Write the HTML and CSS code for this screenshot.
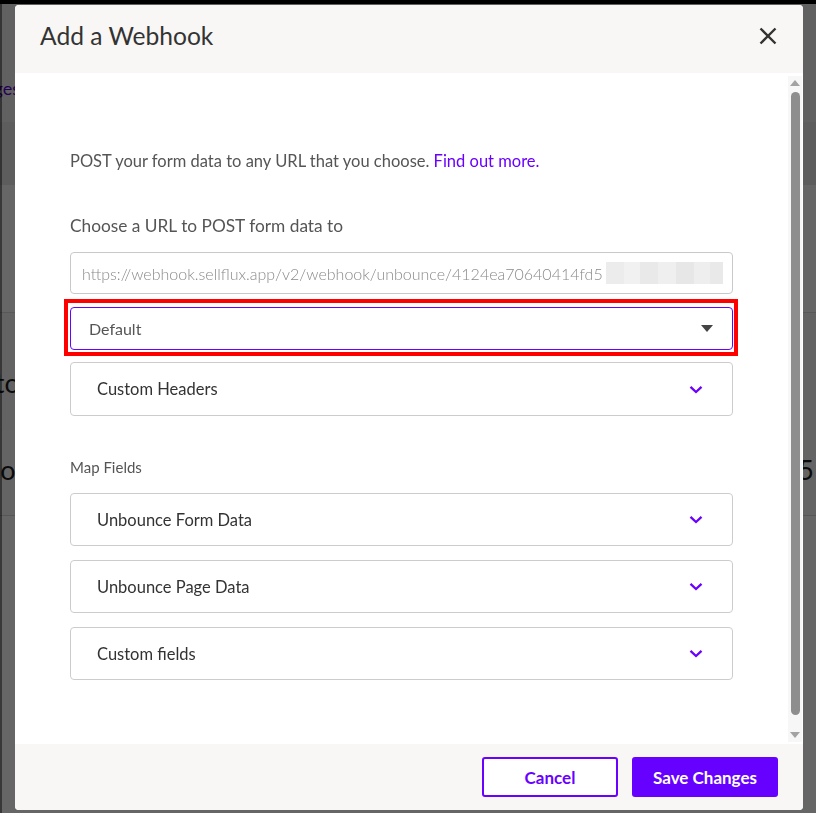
FILE: index.html
```html
<!DOCTYPE html>
<html lang="en">
<head>
<meta charset="utf-8">
<title>Add a Webhook</title>
<link rel="stylesheet" href="styles.css">
</head>
<body>
<div class="page">
  <div class="pg-row pg-nav"><span class="pg-link">Pages</span></div>
  <div class="pg-row pg-section"></div>
  <div class="pg-row pg-title"><span class="pg-big">Go to</span></div>
  <div class="pg-row pg-stats"><span class="pg-big">No</span><span class="pg-big">65</span></div>
  <div class="pg-row pg-rest"></div>
</div>

<div class="top-strip"></div>

<div class="backdrop">
  <div class="modal" role="dialog" aria-labelledby="modal-title">
    <header class="modal-header">
      <h1 id="modal-title" class="modal-title">Add a Webhook</h1>
      <button class="close-btn" aria-label="Close">
        <svg width="18" height="18" viewBox="0 0 18 18"><path d="M1.5 1.5 L16.5 16.5 M16.5 1.5 L1.5 16.5" stroke="#333" stroke-width="2.4" fill="none"/></svg>
      </button>
    </header>

    <div class="modal-body">
      <div class="content">
        <p class="intro">POST your form data to any URL that you choose. <a class="link" href="#">Find out more.</a></p>
        <p class="label">Choose a URL to POST form data to</p>
        <div class="input">
          <span class="url-text">https://webhook.sellflux.app/v2/webhook/unbounce/4124ea70640414fd5</span>
          <span class="redact"></span>
        </div>
        <div class="highlight">
          <div class="select">
            <span>Default</span>
            <span class="caret"></span>
          </div>
        </div>
        <div class="accordion first">
          <span>Custom Headers</span>
          <svg class="chev" width="14" height="9" viewBox="0 0 14 9"><path d="M1.5 1.8 L7 7 L12.5 1.8" stroke="#6a00ff" stroke-width="2.3" fill="none"/></svg>
        </div>
        <p class="section-label">Map Fields</p>
        <div class="acc-list">
          <div class="accordion">
            <span>Unbounce Form Data</span>
            <svg class="chev" width="14" height="9" viewBox="0 0 14 9"><path d="M1.5 1.8 L7 7 L12.5 1.8" stroke="#6a00ff" stroke-width="2.3" fill="none"/></svg>
          </div>
          <div class="accordion">
            <span>Unbounce Page Data</span>
            <svg class="chev" width="14" height="9" viewBox="0 0 14 9"><path d="M1.5 1.8 L7 7 L12.5 1.8" stroke="#6a00ff" stroke-width="2.3" fill="none"/></svg>
          </div>
          <div class="accordion">
            <span>Custom fields</span>
            <svg class="chev" width="14" height="9" viewBox="0 0 14 9"><path d="M1.5 1.8 L7 7 L12.5 1.8" stroke="#6a00ff" stroke-width="2.3" fill="none"/></svg>
          </div>
        </div>
      </div>

      <div class="scrollbar" aria-hidden="true">
        <span class="sb-btn"><span class="tri-up"></span></span>
        <span class="sb-thumb"></span>
        <span class="sb-space"></span>
        <span class="sb-btn"><span class="tri-down"></span></span>
      </div>
    </div>

    <footer class="modal-footer">
      <button class="btn btn-outline">Cancel</button>
      <button class="btn btn-primary">Save Changes</button>
    </footer>
  </div>
</div>
</body>
</html>
```
FILE: styles.css
```css
* { box-sizing: border-box; }

html, body {
  margin: 0;
  padding: 0;
  height: 100%;
}

body {
  font-family: Lato, "Liberation Sans", sans-serif;
  background: #ffffff;
  color: #333;
  overflow: hidden;
}

/* underlying page (seen through the backdrop) */
.page {
  display: flex;
  flex-direction: column;
}
.pg-row {
  display: flex;
  align-items: flex-start;
  justify-content: space-between;
}
.pg-nav {
  height: 185px;
  padding-top: 77px;
  background: linear-gradient(#f2f2f2 0 122px, #e9e9e9 122px);
}
.pg-link {
  color: #5a00d6;
  font-size: 18px;
  line-height: 22px;
  margin-left: -26px;
}
.pg-section {
  height: 128px;
  background: #fff;
  border-bottom: 1px solid #dcdcdc;
}
.pg-big {
  font-size: 27px;
  line-height: 30px;
  color: #1d1d1d;
}
.pg-title {
  height: 117px;
  padding-top: 55px;
  background: #f8f8f8;
}
.pg-title .pg-big { margin-left: -47px; }
.pg-stats {
  height: 86px;
  padding-top: 25px;
  background: #fafafa;
  border-bottom: 1px solid #d6d6d6;
}
.pg-stats .pg-big:first-child { margin-left: -20px; }
.pg-stats .pg-big:last-child { margin-right: 2px; }
.pg-rest { height: 400px; background: #fff; }

.top-strip {
  position: fixed;
  top: 0;
  left: 0;
  right: 0;
  height: 4px;
  background: #000;
  z-index: 5;
}

/* overlay */
.backdrop {
  position: fixed;
  top: 4px;
  left: 0;
  right: 0;
  bottom: 0;
  background: rgba(0, 0, 0, 0.6);
  border-left: 2px solid rgba(0, 0, 0, 0.45);
  padding: 1px 13px 3px 13px;
  display: flex;
}

.modal {
  width: 788px;
  height: 805px;
  background: #fff;
  border-radius: 4px;
  overflow: hidden;
  display: flex;
  flex-direction: column;
}

.modal-header {
  flex: 0 0 68px;
  background: #f8f7f5;
  display: flex;
  align-items: center;
  justify-content: space-between;
  padding: 0 26px 7px 25px;
}
.modal-title {
  margin: 0;
  font-size: 24.6px;
  font-weight: 400;
  color: #333;
}
.close-btn {
  border: 0;
  background: none;
  padding: 0;
  width: 18px;
  height: 18px;
  display: flex;
}

.modal-body {
  flex: 1;
  position: relative;
  overflow: hidden;
  background: #fff;
}
.content {
  padding: 76px 70px 0 55px;
  display: flex;
  flex-direction: column;
}

.intro {
  margin: 0;
  font-size: 16.5px;
  line-height: 24px;
  color: #555;
}
.link {
  color: #6a00ff;
  text-decoration: none;
}
.label {
  margin: 41px 0 0;
  font-size: 17.3px;
  line-height: 24px;
  color: #555;
}

.input {
  margin-top: 14px;
  height: 42px;
  border: 1px solid #c9c9c9;
  border-radius: 4px;
  padding: 0 9px 0 11px;
  display: flex;
  align-items: center;
  font-size: 16px;
  font-weight: 300;
  color: #8a8a8a;
}
.url-text {
  flex: 1;
  white-space: nowrap;
  overflow: hidden;
}
.redact {
  flex: 0 0 117px;
  height: 22px;
  background: linear-gradient(90deg,
    #ececec 0 18px, #f1f1f1 18px 34px, #e9e9e9 34px 52px,
    #efefef 52px 70px, #e7e7e7 70px 88px, #eeeeee 88px 104px, #e9e9e9 104px);
}

.highlight {
  margin: 5px -5px 0 -6px;
  border: 4px solid #ff0000;
  padding: 4px 1px 2px 2px;
}
.select {
  height: 43px;
  border: 1px solid #6a00ff;
  border-radius: 4px;
  padding: 0 19px 0 18px;
  display: flex;
  align-items: center;
  justify-content: space-between;
  font-size: 16px;
  color: #555;
}
.caret {
  width: 0;
  height: 0;
  border-left: 6px solid transparent;
  border-right: 6px solid transparent;
  border-top: 7px solid #444;
}

.accordion {
  height: 53px;
  border: 1px solid #cccccc;
  border-radius: 4px;
  padding: 0 29px 0 26px;
  display: flex;
  align-items: center;
  justify-content: space-between;
  font-size: 16.5px;
  color: #333;
}
.accordion.first {
  margin-top: 6px;
  height: 54px;
}
.chev { display: block; }

.section-label {
  margin: 41px 0 0;
  font-size: 15px;
  line-height: 20px;
  color: #555;
}
.acc-list {
  margin-top: 16px;
  display: flex;
  flex-direction: column;
  gap: 14px;
}

/* scrollbar overlay */
.scrollbar {
  position: absolute;
  top: 3px;
  right: 1px;
  bottom: 2px;
  width: 14px;
  background: #f7f7f7;
  display: flex;
  flex-direction: column;
  align-items: center;
}
.sb-btn {
  flex: 0 0 14px;
  display: flex;
  align-items: center;
  justify-content: center;
}
.tri-up, .tri-down {
  width: 0;
  height: 0;
  border-left: 5px solid transparent;
  border-right: 5px solid transparent;
}
.tri-up { border-bottom: 6px solid #a3a3a3; }
.tri-down { border-top: 6px solid #a3a3a3; }
.sb-thumb {
  margin-top: 2px;
  width: 9px;
  flex: 0 0 623px;
  border-radius: 5px;
  background: #8e8e8e;
  margin-left: 1px;
}
.sb-space { flex: 1; }

.modal-footer {
  flex: 0 0 66px;
  background: #f8f7f5;
  display: flex;
  justify-content: flex-end;
  align-items: center;
  gap: 14px;
  padding: 0 25px;
}
.btn {
  height: 40px;
  border-radius: 3px;
  font-family: Lato, "Liberation Sans", sans-serif;
  font-size: 17px;
  font-weight: 700;
  cursor: pointer;
}
.btn-outline {
  width: 136px;
  border: 2px solid #6a00ff;
  background: #fff;
  color: #6a00ff;
}
.btn-primary {
  width: 146px;
  border: 0;
  background: #6600ff;
  color: #fff;
}
```
